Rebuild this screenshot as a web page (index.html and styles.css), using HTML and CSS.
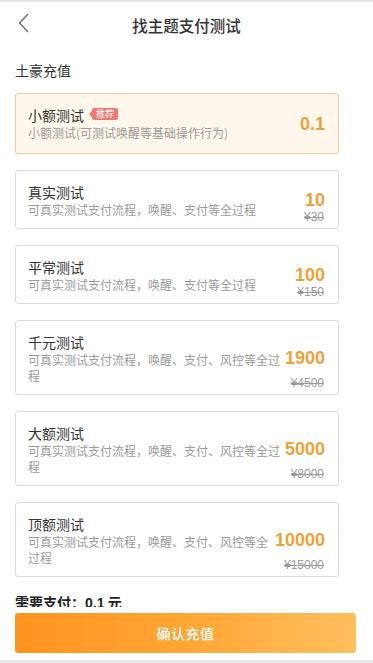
FILE: index.html
```html
<!DOCTYPE html>
<html lang="zh-CN">
<head>
<meta charset="utf-8">
<title>找主题支付测试</title>
<link rel="stylesheet" href="styles.css">
</head>
<body>
<div class="topline"></div>
<header class="nav">
  <span class="back">
    <svg width="11" height="20" viewBox="0 0 11 20"><path d="M10 1 L1.6 10 L10 19" fill="none" stroke="#6b6b6b" stroke-width="1.3"/></svg>
  </span>
  <h1 class="nav-title">找主题支付测试</h1>
  <span></span>
</header>
<main class="content">
  <h2 class="section-title">土豪充值</h2>
  <ul class="plans">
    <li class="plan plan--active">
      <div class="plan-info">
        <div class="plan-name">小额测试<span class="badge">推荐</span></div>
        <div class="plan-desc">小额测试(可测试唤醒等基础操作行为)</div>
      </div>
      <div class="plan-price"><span class="price">0.1</span></div>
    </li>
    <li class="plan">
      <div class="plan-info">
        <div class="plan-name">真实测试</div>
        <div class="plan-desc">可真实测试支付流程，唤醒、支付等全过程</div>
      </div>
      <div class="plan-price"><span class="price">10</span><span class="orig">¥30</span></div>
    </li>
    <li class="plan">
      <div class="plan-info">
        <div class="plan-name">平常测试</div>
        <div class="plan-desc">可真实测试支付流程，唤醒、支付等全过程</div>
      </div>
      <div class="plan-price"><span class="price">100</span><span class="orig">¥150</span></div>
    </li>
    <li class="plan">
      <div class="plan-info">
        <div class="plan-name">千元测试</div>
        <div class="plan-desc">可真实测试支付流程，唤醒、支付、风控等全过程</div>
      </div>
      <div class="plan-price"><span class="price">1900</span><span class="orig">¥4500</span></div>
    </li>
    <li class="plan">
      <div class="plan-info">
        <div class="plan-name">大额测试</div>
        <div class="plan-desc">可真实测试支付流程，唤醒、支付、风控等全过程</div>
      </div>
      <div class="plan-price"><span class="price">5000</span><span class="orig">¥8000</span></div>
    </li>
    <li class="plan">
      <div class="plan-info">
        <div class="plan-name">顶额测试</div>
        <div class="plan-desc">可真实测试支付流程，唤醒、支付、风控等全过程</div>
      </div>
      <div class="plan-price"><span class="price">10000</span><span class="orig">¥15000</span></div>
    </li>
  </ul>
  <p class="pay">需要支付：<span class="pay-num">0.1</span> 元</p>
</main>
<footer class="footer">
  <button class="confirm" type="button">确认充值</button>
</footer>
</body>
</html>
```
FILE: styles.css
```css
* { box-sizing: border-box; }
html, body { margin: 0; padding: 0; }
body {
  width: 373px;
  height: 663px;
  overflow: hidden;
  background: #fff;
  color: #333;
  font-family: "Noto Sans CJK SC", "Liberation Sans", sans-serif;
}
.topline { height: 2px; background: #e6e6e6; }
.nav {
  height: 46px;
  display: grid;
  grid-template-columns: 1fr auto 1fr;
}
.back {
  align-self: start;
  padding-left: 18px;
  margin-top: 11px;
  display: flex;
}
.nav-title {
  margin: 0;
  font-size: 15.5px;
  font-weight: 500;
  line-height: 46px;
  color: #333;
}
.content { padding: 0 34px 0 15px; }
.section-title {
  margin: 12px 0 13px;
  font-size: 14px;
  font-weight: normal;
  line-height: 20px;
  color: #333;
}
.plans {
  list-style: none;
  margin: 0;
  padding: 0;
  display: flex;
  flex-direction: column;
  gap: 16px;
}
.plan {
  display: flex;
  border: 1px solid #dcdcdc;
  border-radius: 3px;
  padding-left: 12px;
  background: #fff;
}
.plan--active {
  background: #fff7eb;
  border-color: #f1cd95;
}
.plan-info {
  flex: 1;
  min-width: 0;
  padding: 12px 0 10px;
}
.plan--active .plan-info { padding-bottom: 12px; }
.plan-name {
  display: flex;
  align-items: center;
  height: 19px;
  font-size: 14px;
  line-height: 19px;
  color: #333;
}
.badge {
  position: relative;
  margin: 0 0 3px 8px;
  padding: 0 4px;
  height: 12px;
  line-height: 12px;
  font-size: 9px;
  color: #fff;
  background: #f07a72;
  border-radius: 2px;
}
.badge::before {
  content: "";
  position: absolute;
  left: -3px;
  top: 3px;
  border-style: solid;
  border-width: 3px 3px 3px 0;
  border-color: transparent #f07a72 transparent transparent;
}
.plan-desc {
  font-size: 12px;
  line-height: 16px;
  color: #9a9a9a;
}
.plan-price {
  display: grid;
  grid-template-rows: 1fr auto 1fr;
  justify-items: end;
  padding: 0 13px 0 4px;
  font-family: "Liberation Sans", "Noto Sans CJK SC", sans-serif;
}
.price {
  grid-row: 2;
  font-size: 18px;
  font-weight: bold;
  line-height: 22px;
  color: #eba23b;
}
.orig {
  grid-row: 3;
  align-self: end;
  margin-bottom: 5px;
  margin-right: 1px;
  font-size: 12px;
  line-height: 12px;
  color: #9a9a9a;
  text-decoration: line-through;
}
.pay {
  margin: 15px 0 0;
  font-size: 14px;
  font-weight: bold;
  line-height: 20px;
  color: #222;
}
.pay-num { font-family: "Liberation Sans", sans-serif; }
.footer {
  position: fixed;
  left: 0;
  right: 0;
  bottom: 0;
  height: 56px;
  padding: 6px 17px 0 15px;
  background: #fff;
  border-bottom: 3px solid #e8e8e8;
}
.confirm {
  display: block;
  width: 100%;
  height: 40px;
  border: 0;
  border-radius: 3px;
  background: linear-gradient(90deg, #ff931f 0%, #ffa838 55%, #ffbf5e 100%);
  color: #fff;
  font-family: "Noto Sans CJK SC", sans-serif;
  font-size: 14px;
  font-weight: 500;
  letter-spacing: 0.5px;
}
```
